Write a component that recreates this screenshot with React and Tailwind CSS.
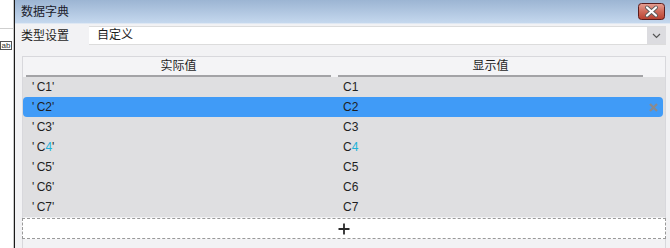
import React from 'react'

const font = { fontFamily: '"Liberation Sans", "Noto Sans CJK SC", sans-serif' }

const rows = ['C1', 'C2', 'C3', 'C4', 'C5', 'C6', 'C7']

function Code({ v }) {
  // the reference renders the digit 4 in cyan
  if (v === 'C4') {
    return (
      <>
        C<span className="text-[#1cb2d8]">4</span>
      </>
    )
  }
  return v
}

function CloseButton() {
  return (
    <svg width="27" height="17" viewBox="0 0 27 17" className="block">
      <defs>
        <linearGradient id="cb" x1="0" y1="0" x2="0" y2="1">
          <stop offset="0" stopColor="#e6a095" />
          <stop offset="0.5" stopColor="#cf6a5a" />
          <stop offset="1" stopColor="#b8402f" />
        </linearGradient>
      </defs>
      <rect x="0.5" y="0.5" width="26" height="16" rx="3" fill="url(#cb)" stroke="#5a1c1c" />
      <path d="M9 4.5 L18 12.5 M18 4.5 L9 12.5" stroke="#5b5b5b" strokeWidth="4" strokeLinecap="round" />
      <path d="M9 4.5 L18 12.5 M18 4.5 L9 12.5" stroke="#ffffff" strokeWidth="2.2" strokeLinecap="round" />
    </svg>
  )
}

export default function App() {
  return (
    <div className="w-[670px] h-[248px] flex bg-white overflow-hidden text-[#1e1e1e]" style={font}>
      <div className="w-[14px] border-r border-[#c9c9c9] flex flex-col">
        <div className="mt-[28px] h-px bg-[#cfcfcf]" />
        <div className="mt-[12px] w-[12px] h-[9px] border border-[#555] text-[8px] leading-[7px] text-[#333] flex items-center justify-center overflow-hidden">
          ab
        </div>
      </div>
      <div className="flex-1 flex flex-col border-l border-[#1a1a1a] bg-[#f2f2f4]">
        <div className="h-[24px] flex items-center justify-between pl-[6px] pr-[5px] bg-gradient-to-b from-[#9cb5d3] to-[#c5d8ee] border-b border-[#dfe8f3]">
          <span className="text-[12px] text-[#1a1a2a]">数据字典</span>
          <CloseButton />
        </div>
        <div className="mt-[2px] h-[19px] flex items-center pl-[6px] pr-[4px]">
          <span className="text-[12px] w-[68px]">类型设置</span>
          <div className="flex-1 h-full flex bg-white border-t border-b border-[#dcdcdc]">
            <span className="flex-1 pl-[8px] text-[12px] leading-[17px]">自定义</span>
            <div className="w-[19px] bg-[#dcdce0] flex items-center justify-center">
              <svg width="9" height="6" viewBox="0 0 9 6">
                <path d="M1 1 L4.5 4.5 L8 1" fill="none" stroke="#555" strokeWidth="1.2" />
              </svg>
            </div>
          </div>
        </div>
        <div className="mt-[11px] ml-[7px] mr-[4px] flex-1 flex flex-col border-x border-t border-[#d8d8dc]">
          <div className="h-[20px] flex pl-[3px] pr-[22px] gap-[7px] bg-[#f4f4f6] text-[12px]">
            <div className="w-[305px] flex items-center justify-center border-b-2 border-[#a3a3a6]">实际值</div>
            <div className="w-[305px] flex items-center justify-center border-b-2 border-[#a3a3a6]">显示值</div>
          </div>
          <div className="bg-[#dfdfe1] flex flex-col">
            {rows.map((r) => {
              const sel = r === 'C2'
              return (
                <div
                  key={r}
                  className={
                    sel
                      ? 'h-[20px] flex items-center pl-[3px] mr-[2px] rounded-[4px] bg-[#409bf7] text-[12px]'
                      : 'h-[20px] flex items-center pl-[3px] text-[12px]'
                  }
                >
                  <div className="w-[305px] pl-[6px]">
                    '&thinsp;<Code v={r} />'
                  </div>
                  <div className="w-[305px] ml-[7px] pl-[5px]">
                    <Code v={r} />
                  </div>
                  {sel && (
                    <svg width="9" height="9" viewBox="0 0 9 9" className="ml-[6px]">
                      <path d="M1 1 L8 8 M8 1 L1 8" stroke="#8a8a8e" strokeWidth="2.2" />
                    </svg>
                  )}
                </div>
              )
            })}
          </div>
          <div className="mt-px -mx-px h-[21px] bg-white border border-dashed border-[#9a9a9a] flex items-center justify-center">
            <svg width="12" height="12" viewBox="0 0 12 12">
              <path d="M6 0.5 V11.5 M0.5 6 H11.5" stroke="#2a2a2a" strokeWidth="1.8" />
            </svg>
          </div>
        </div>
      </div>
    </div>
  )
}
